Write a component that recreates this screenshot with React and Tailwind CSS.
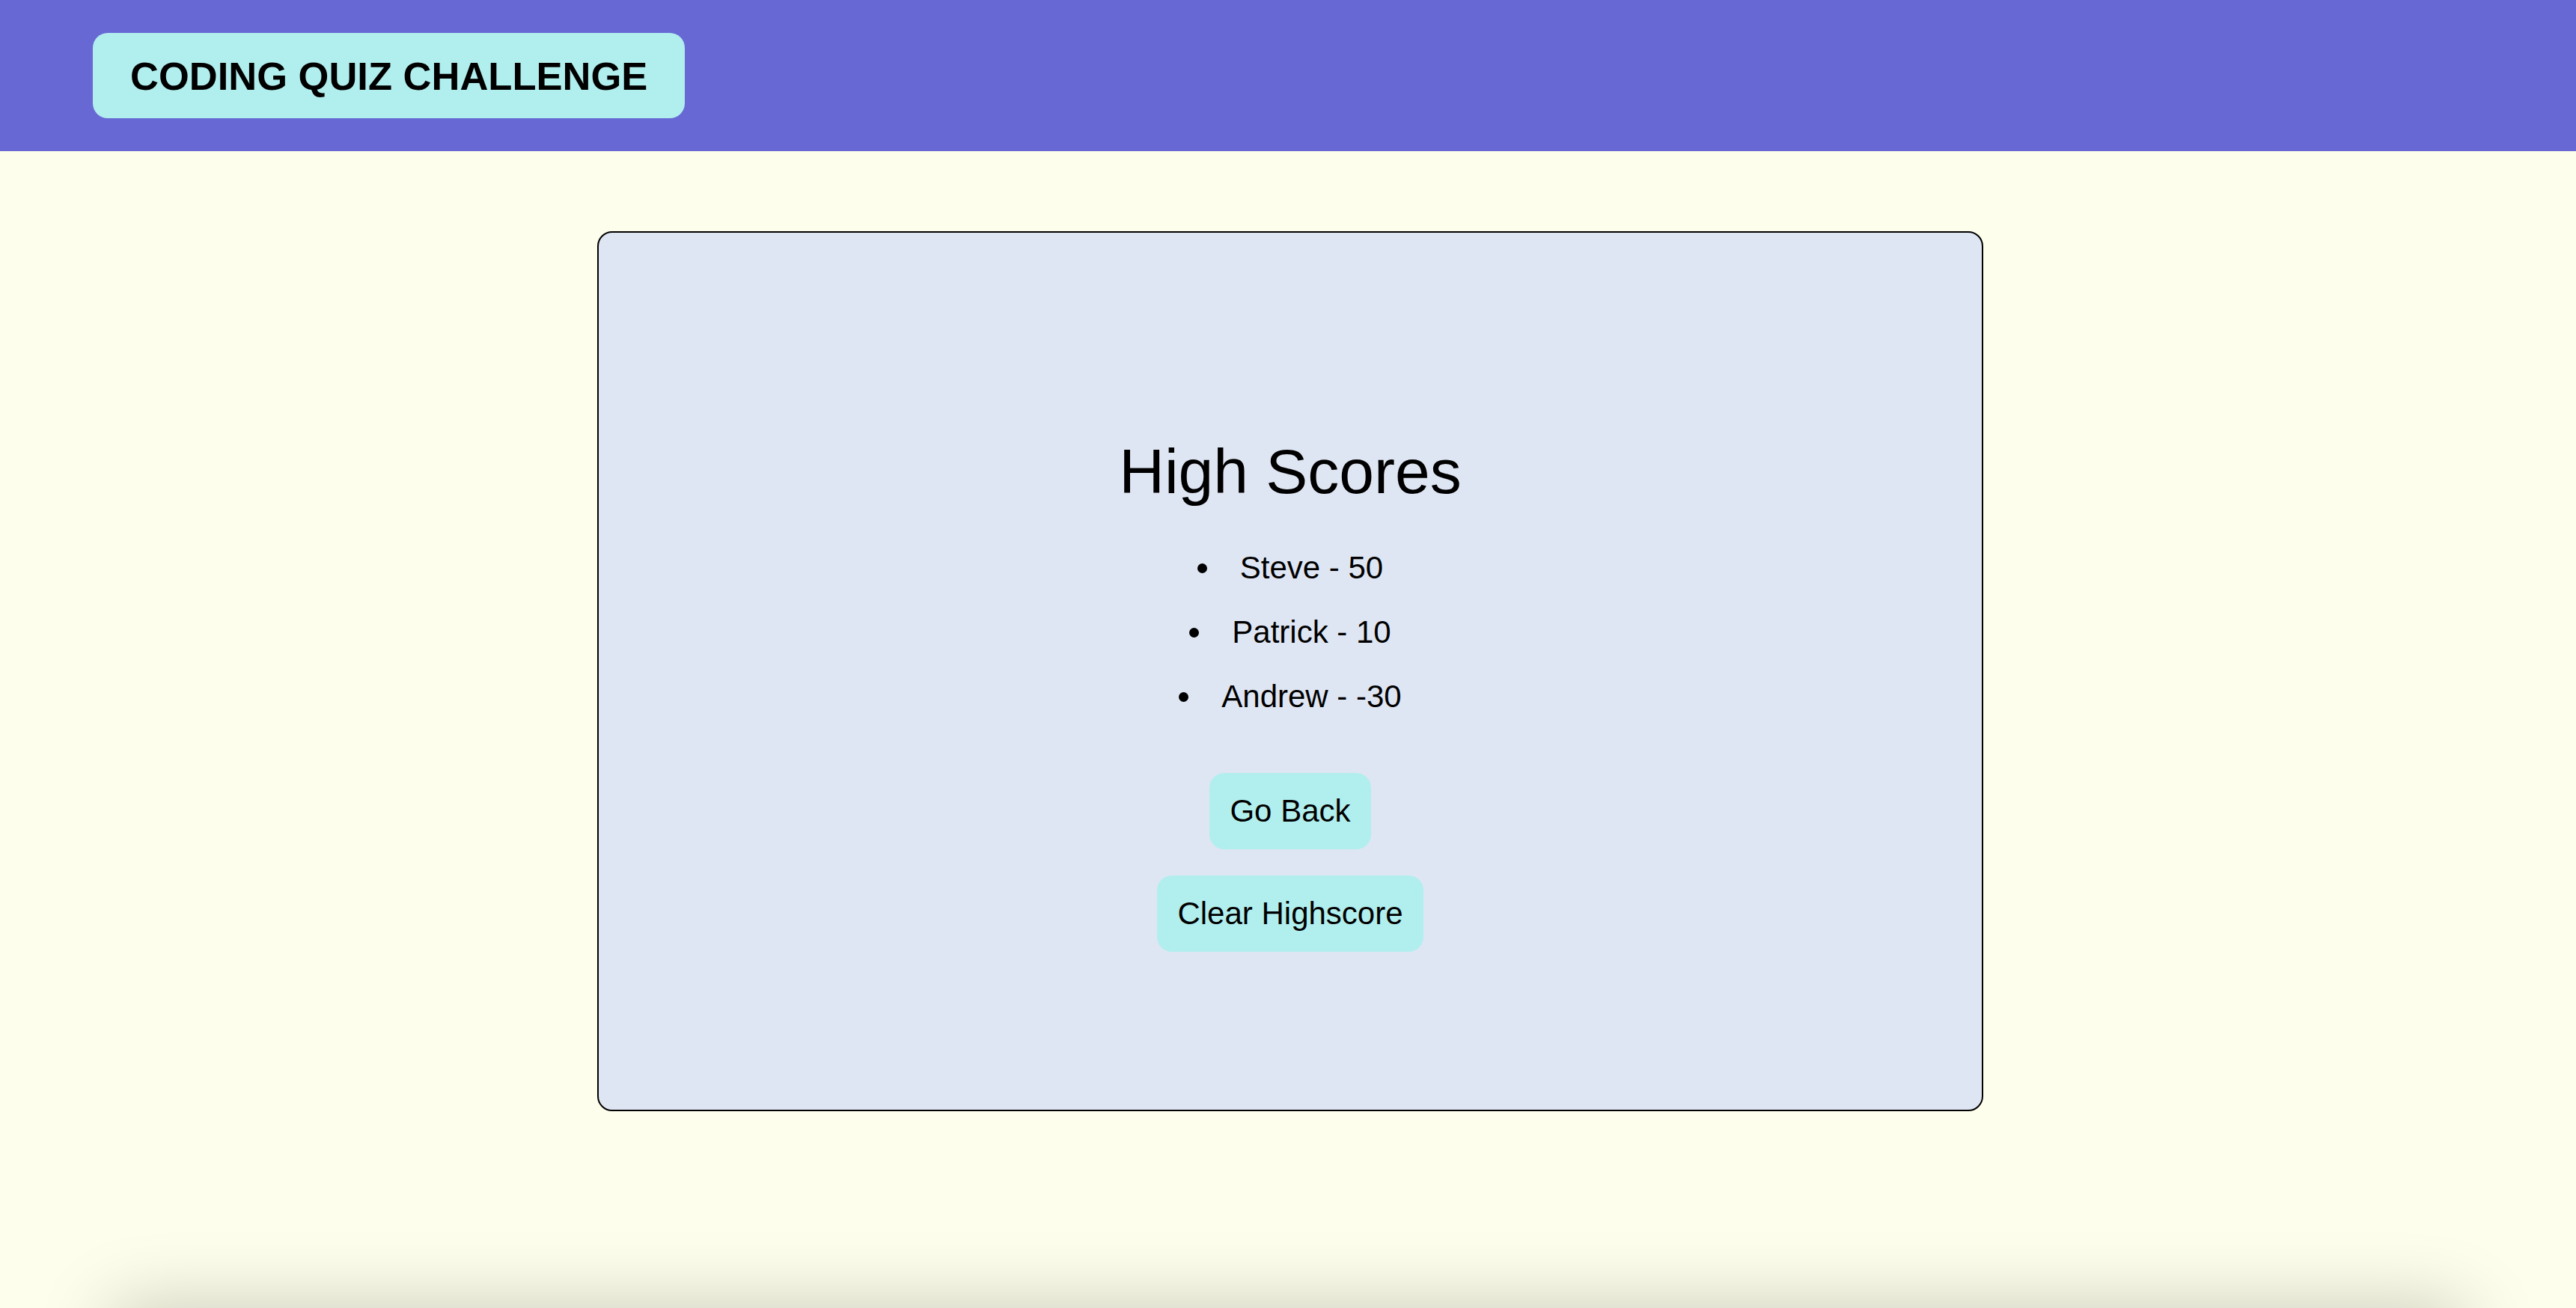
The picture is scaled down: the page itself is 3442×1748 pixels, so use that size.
import React from 'react';

const scores = [
  { name: 'Steve', score: 50 },
  { name: 'Patrick', score: 10 },
  { name: 'Andrew', score: -30 },
];

const App = () => {
  return (
    <div className="h-[1748px] overflow-hidden flex flex-col bg-[#fdfeeb] text-black font-['Liberation_Sans',Arial,sans-serif]">
      {/* Header */}
      <header className="shrink-0 h-[202px] bg-[#6868d4] px-[124px] py-[44px]">
        <div className="inline-flex items-center h-[114px] px-[50px] rounded-[20px] bg-[#b1eeee]">
          <h1 className="text-[52.5px] font-bold leading-[61px]">CODING QUIZ CHALLENGE</h1>
        </div>
      </header>

      {/* Main */}
      <main className="flex-1">
        <div className="ml-[798px] mt-[107px] w-[1852px] h-[1176px] rounded-[20px] border-2 border-black bg-[#dfe6f3] pt-[271px] flex flex-col items-center">
          <h2 className="text-[84px] leading-[96px] font-normal">High Scores</h2>

          <ul className="mt-[57px] flex flex-col gap-[38px]">
            {scores.map((s) => (
              <li key={s.name} className="flex items-center justify-center text-[42px] leading-[48px]">
                <span className="w-[13px] h-[13px] rounded-full bg-black mr-[44px]" />
                <span>
                  {s.name} - {s.score}
                </span>
              </li>
            ))}
          </ul>

          <button className="mt-[78px] px-[27px] py-[27px] rounded-[20px] bg-[#b1eeee] text-[42px] leading-[48px]">
            Go Back
          </button>
          <button className="mt-[35px] px-[27px] py-[27px] rounded-[20px] bg-[#b1eeee] text-[42px] leading-[48px]">
            Clear Highscore
          </button>
        </div>
      </main>

      {/* Footer sits just below the fold, only its shadow shows */}
      <footer className="shrink-0 h-[100px] -mb-[100px] mx-[150px] bg-[#fdfeeb] shadow-[0_0_100px_rgba(0,0,0,0.22)]" />
    </div>
  );
};

export default App;
